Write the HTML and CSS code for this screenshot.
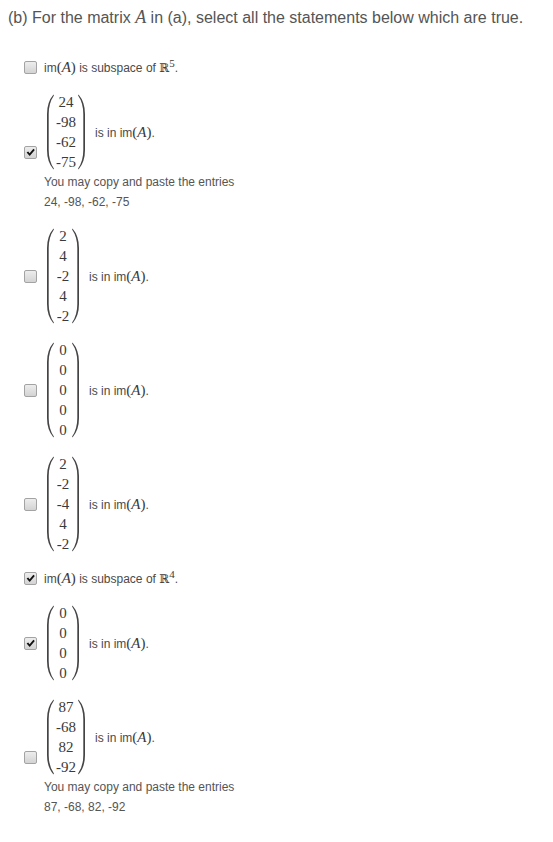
FILE: index.html
```html
<!DOCTYPE html>
<html>
<head>
<meta charset="utf-8">
<link rel="stylesheet" href="styles.css">
</head>
<body>
<div class="page">
  <p class="prompt">(b) For the matrix <span class="mi big">A</span> in (a), select all the statements below which are true.</p>
  <ul class="options">
    <li class="option">
      <span class="box"></span>
      <div class="body">
        <div class="stmt">im<span class="math">(<span class="mi">A</span>)</span> is subspace of <span class="bb">ℝ</span><sup class="sup">5</sup>.</div>
      </div>
    </li>

    <li class="option">
      <span class="box on"><svg viewBox="0 0 13 13" width="13" height="13"><path d="M2.6 6.6 L4.2 5.4 L5.6 7.2 L9.4 2.8 L10.8 3.9 L5.7 9.9 Z"/></svg></span>
      <div class="body">
        <div class="vecline">
          <span class="matrix">
            <svg class="paren" width="8" height="76" viewBox="0 0 8 76"><path d="M7.5,0.5 Q1,8 1,20 L1,56 Q1,68 7.5,75.5 L7.9,74.6 Q2.7,67 2.7,56 L2.7,20 Q2.7,9 7.9,1.4 Z"/></svg>
            <span class="col"><span>24</span><span>-98</span><span>-62</span><span>-75</span></span>
            <svg class="paren" width="8" height="76" viewBox="0 0 8 76"><path d="M0.5,0.5 Q7,8 7,20 L7,56 Q7,68 0.5,75.5 L0.1,74.6 Q5.3,67 5.3,56 L5.3,20 Q5.3,9 0.1,1.4 Z"/></svg>
          </span>
          <span class="tail">is in im<span class="math">(<span class="mi">A</span>)</span>.</span>
        </div>
        <div class="note">You may copy and paste the entries</div>
        <div class="note">24, -98, -62, -75</div>
      </div>
    </li>

    <li class="option">
      <span class="box"></span>
      <div class="body">
        <div class="vecline">
          <span class="matrix">
            <svg class="paren" width="8" height="96" viewBox="0 0 8 96"><path d="M7.5,0.5 Q1,8 1,20 L1,76 Q1,88 7.5,95.5 L7.9,94.6 Q2.7,87 2.7,76 L2.7,20 Q2.7,9 7.9,1.4 Z"/></svg>
            <span class="col"><span>2</span><span>4</span><span>-2</span><span>4</span><span>-2</span></span>
            <svg class="paren" width="8" height="96" viewBox="0 0 8 96"><path d="M0.5,0.5 Q7,8 7,20 L7,76 Q7,88 0.5,95.5 L0.1,94.6 Q5.3,87 5.3,76 L5.3,20 Q5.3,9 0.1,1.4 Z"/></svg>
          </span>
          <span class="tail">is in im<span class="math">(<span class="mi">A</span>)</span>.</span>
        </div>
      </div>
    </li>

    <li class="option">
      <span class="box"></span>
      <div class="body">
        <div class="vecline">
          <span class="matrix">
            <svg class="paren" width="8" height="96" viewBox="0 0 8 96"><path d="M7.5,0.5 Q1,8 1,20 L1,76 Q1,88 7.5,95.5 L7.9,94.6 Q2.7,87 2.7,76 L2.7,20 Q2.7,9 7.9,1.4 Z"/></svg>
            <span class="col"><span>0</span><span>0</span><span>0</span><span>0</span><span>0</span></span>
            <svg class="paren" width="8" height="96" viewBox="0 0 8 96"><path d="M0.5,0.5 Q7,8 7,20 L7,76 Q7,88 0.5,95.5 L0.1,94.6 Q5.3,87 5.3,76 L5.3,20 Q5.3,9 0.1,1.4 Z"/></svg>
          </span>
          <span class="tail">is in im<span class="math">(<span class="mi">A</span>)</span>.</span>
        </div>
      </div>
    </li>

    <li class="option">
      <span class="box"></span>
      <div class="body">
        <div class="vecline">
          <span class="matrix">
            <svg class="paren" width="8" height="96" viewBox="0 0 8 96"><path d="M7.5,0.5 Q1,8 1,20 L1,76 Q1,88 7.5,95.5 L7.9,94.6 Q2.7,87 2.7,76 L2.7,20 Q2.7,9 7.9,1.4 Z"/></svg>
            <span class="col"><span>2</span><span>-2</span><span>-4</span><span>4</span><span>-2</span></span>
            <svg class="paren" width="8" height="96" viewBox="0 0 8 96"><path d="M0.5,0.5 Q7,8 7,20 L7,76 Q7,88 0.5,95.5 L0.1,94.6 Q5.3,87 5.3,76 L5.3,20 Q5.3,9 0.1,1.4 Z"/></svg>
          </span>
          <span class="tail">is in im<span class="math">(<span class="mi">A</span>)</span>.</span>
        </div>
      </div>
    </li>

    <li class="option">
      <span class="box on"><svg viewBox="0 0 13 13" width="13" height="13"><path d="M2.6 6.6 L4.2 5.4 L5.6 7.2 L9.4 2.8 L10.8 3.9 L5.7 9.9 Z"/></svg></span>
      <div class="body">
        <div class="stmt">im<span class="math">(<span class="mi">A</span>)</span> is subspace of <span class="bb">ℝ</span><sup class="sup">4</sup>.</div>
      </div>
    </li>

    <li class="option">
      <span class="box on"><svg viewBox="0 0 13 13" width="13" height="13"><path d="M2.6 6.6 L4.2 5.4 L5.6 7.2 L9.4 2.8 L10.8 3.9 L5.7 9.9 Z"/></svg></span>
      <div class="body">
        <div class="vecline">
          <span class="matrix">
            <svg class="paren" width="8" height="76" viewBox="0 0 8 76"><path d="M7.5,0.5 Q1,8 1,20 L1,56 Q1,68 7.5,75.5 L7.9,74.6 Q2.7,67 2.7,56 L2.7,20 Q2.7,9 7.9,1.4 Z"/></svg>
            <span class="col"><span>0</span><span>0</span><span>0</span><span>0</span></span>
            <svg class="paren" width="8" height="76" viewBox="0 0 8 76"><path d="M0.5,0.5 Q7,8 7,20 L7,56 Q7,68 0.5,75.5 L0.1,74.6 Q5.3,67 5.3,56 L5.3,20 Q5.3,9 0.1,1.4 Z"/></svg>
          </span>
          <span class="tail">is in im<span class="math">(<span class="mi">A</span>)</span>.</span>
        </div>
      </div>
    </li>

    <li class="option">
      <span class="box"></span>
      <div class="body">
        <div class="vecline">
          <span class="matrix">
            <svg class="paren" width="8" height="76" viewBox="0 0 8 76"><path d="M7.5,0.5 Q1,8 1,20 L1,56 Q1,68 7.5,75.5 L7.9,74.6 Q2.7,67 2.7,56 L2.7,20 Q2.7,9 7.9,1.4 Z"/></svg>
            <span class="col"><span>87</span><span>-68</span><span>82</span><span>-92</span></span>
            <svg class="paren" width="8" height="76" viewBox="0 0 8 76"><path d="M0.5,0.5 Q7,8 7,20 L7,56 Q7,68 0.5,75.5 L0.1,74.6 Q5.3,67 5.3,56 L5.3,20 Q5.3,9 0.1,1.4 Z"/></svg>
          </span>
          <span class="tail">is in im<span class="math">(<span class="mi">A</span>)</span>.</span>
        </div>
        <div class="note">You may copy and paste the entries</div>
        <div class="note">87, -68, 82, -92</div>
      </div>
    </li>
  </ul>
</div>
</body>
</html>
```

FILE: styles.css
```css
html, body {
  margin: 0;
  padding: 0;
  background: #ffffff;
}

.page {
  padding: 7px 8px 20px 8px;
  font-family: "Liberation Sans", Arial, sans-serif;
  color: #555555;
}

.prompt {
  margin: 0 0 29px 0;
  font-size: 16px;
  line-height: 20px;
  color: #555555;
}

.mi {
  font-family: "Liberation Serif", "Times New Roman", serif;
  font-style: italic;
}

.mi.big {
  font-size: 18px;
}

.options {
  list-style: none;
  margin: 0;
  padding: 0 0 0 16px;
  display: flex;
  flex-direction: column;
  gap: 14px;
}

.option {
  display: flex;
  align-items: center;
  gap: 7px;
}

.box {
  flex: none;
  width: 13px;
  height: 13px;
  box-sizing: border-box;
  border: 1px solid #a3a3a3;
  border-radius: 2px;
  background: linear-gradient(#ededed, #d3d3d3);
  position: relative;
}

.box svg {
  position: absolute;
  left: -1px;
  top: -1px;
  fill: #111111;
}

.body {
  display: flex;
  flex-direction: column;
}

.stmt {
  font-size: 12px;
  line-height: 20px;
  color: #4a4a4a;
}

.math {
  font-family: "Liberation Serif", "Times New Roman", serif;
  font-size: 15px;
  color: #3a3a3a;
}

.bb {
  font-family: "DejaVu Serif", serif;
  font-size: 12px;
  color: #3a3a3a;
}

.sup {
  font-family: "Liberation Serif", "Times New Roman", serif;
  font-size: 11px;
  color: #3a3a3a;
  vertical-align: 5px;
  line-height: 0;
}

.vecline {
  display: flex;
  align-items: center;
}

.matrix {
  display: flex;
  align-items: center;
}

.paren {
  flex: none;
  display: block;
  fill: #444444;
}

.matrix .paren:first-child {
  margin-left: 2px;
}

.col {
  display: flex;
  flex-direction: column;
  align-items: center;
  min-width: 14px;
  padding: 0 2px;
  font-family: "Liberation Serif", "Times New Roman", serif;
  font-size: 15px;
  line-height: 20px;
  color: #3a3a3a;
}

.tail {
  margin-left: 9px;
  font-size: 12px;
  line-height: 20px;
  color: #4a4a4a;
}

.note {
  font-size: 12px;
  line-height: 20px;
  color: #555555;
}
```
